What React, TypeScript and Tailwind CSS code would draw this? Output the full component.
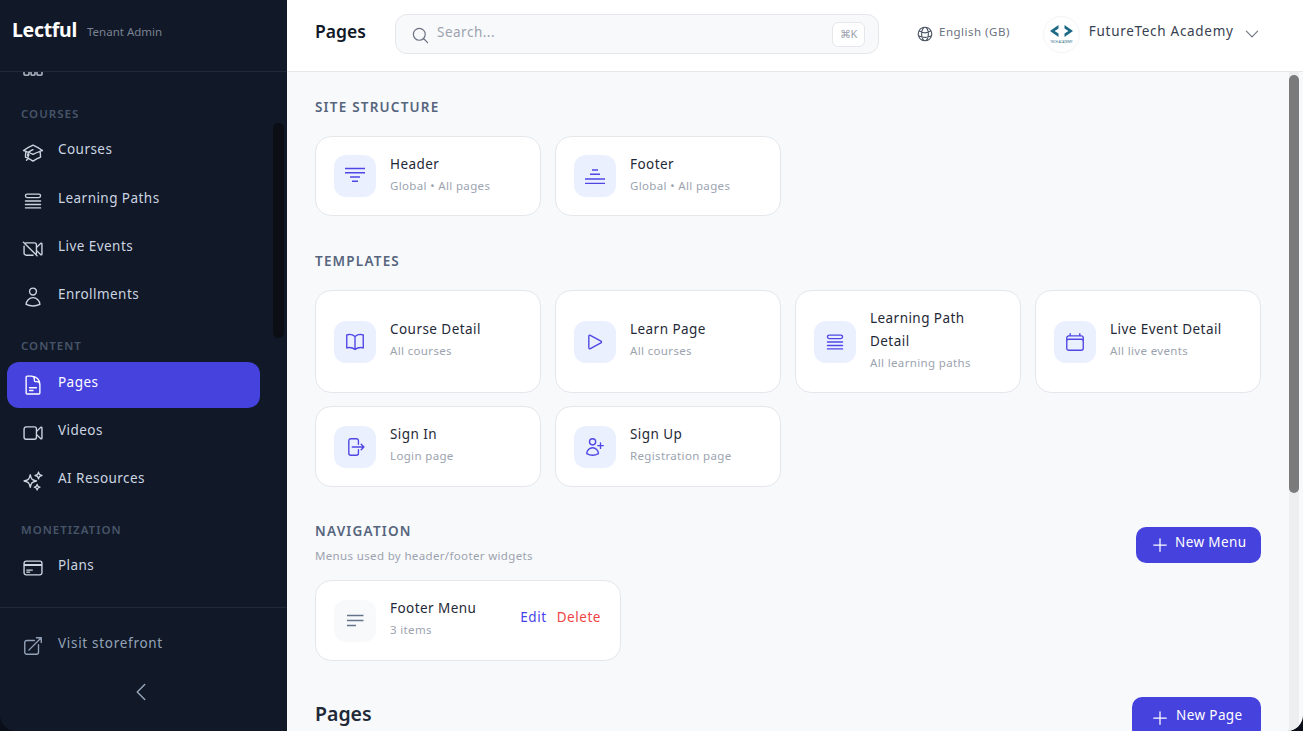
import React from "react";
import {
  HiOutlineAcademicCap, HiOutlineQueueList, HiOutlineVideoCameraSlash, HiOutlineUser,
  HiOutlineDocumentText, HiOutlineVideoCamera, HiOutlineSparkles, HiOutlineCreditCard,
  HiOutlineArrowTopRightOnSquare, HiOutlineChevronLeft, HiOutlineChevronDown, HiOutlineMagnifyingGlass,
  HiOutlineGlobeAlt, HiOutlineBookOpen, HiOutlinePlay, HiOutlineCalendar, HiOutlineArrowRightOnRectangle,
  HiOutlineUserPlus, HiOutlinePlus,
} from "react-icons/hi2";

const font = { fontFamily: '"Noto Sans", sans-serif' };

function HeaderIcon() {
  return (
    <svg width="22" height="22" viewBox="0 0 22 22" fill="none" stroke="currentColor" strokeWidth="1.4">
      <path d="M1 3.5h20M1 7.7h20M6 12h10M8 16.3h6" />
    </svg>
  );
}
function FooterIcon() {
  return (
    <svg width="22" height="22" viewBox="0 0 22 22" fill="none" stroke="currentColor" strokeWidth="1.4">
      <path d="M8 5h6M6 9.3h10M1 14h20M1 18.4h20" />
    </svg>
  );
}
function MenuIcon() {
  return (
    <svg width="22" height="22" viewBox="0 0 22 22" fill="none" stroke="currentColor" strokeWidth="1.4">
      <path d="M3 5.5h16.5M3 10.5h16.5M3 15.5h9" />
    </svg>
  );
}

function NavItem({ icon: I, label, active, tight }: { icon: any; label: string; active?: boolean; tight?: boolean }) {
  return (
    <div className={`ml-[7px] mr-[27px] h-[46px] flex items-center px-[15px] gap-[14px] rounded-xl ${tight ? "mb-[2px]" : "mb-[2.3px]"} ${active ? "bg-[#4642de] text-white" : "text-[#cbd5e1]"}`}>
      <I className="w-[22px] h-[22px] shrink-0" />
      <span className="text-[13.5px] tracking-[0.45px] mb-[6px]">{label}</span>
    </div>
  );
}

function Label({ children }: { children: React.ReactNode }) {
  return <div className="ml-[21px] h-[16px] leading-[16px] text-[11.5px] font-semibold tracking-[1px] text-[#475569]">{children}</div>;
}

function Card({ icon, title, sub, muted, wide, actions }: { icon: React.ReactNode; title: string; sub: string; muted?: boolean; wide?: boolean; actions?: boolean }) {
  return (
    <div className={`bg-white border border-[#e5e7eb] rounded-2xl px-[18px] flex items-center gap-[14px] ${wide ? "w-[306px] h-[81px]" : ""}`}>
      <div className={`w-[42px] h-[42px] rounded-xl flex items-center justify-center shrink-0 ${muted ? "bg-[#f8f9fb] text-[#64748b]" : "bg-[#ebf0fe] text-[#4f46e5]"}`}>
        {icon}
      </div>
      <div className="flex-1 min-w-0 mb-[4px]">
        <div className="text-[13.5px] leading-[23px] tracking-[0.45px] text-[#1f2937]">{title}</div>
        <div className="text-[11.5px] leading-[20px] tracking-[0.35px] text-[#9ca3af]">{sub}</div>
      </div>
      {actions && (
        <div className="flex gap-[10px] text-[13.5px] tracking-[0.55px] mb-[6px] mr-[1px]">
          <span className="text-[#4642e8]">Edit</span>
          <span className="text-[#ef4444]">Delete</span>
        </div>
      )}
    </div>
  );
}

function Section({ children }: { children: React.ReactNode }) {
  return <div className="text-[13.5px] leading-[20px] font-semibold tracking-[1.2px] text-[#56657d]">{children}</div>;
}

function Button({ label, box }: { label: string; box: string }) {
  return (
    <div className={`shrink-0 rounded-[10px] bg-[#4642de] text-white flex items-center ${box}`}>
      <HiOutlinePlus className="w-[20px] h-[20px]" />
      <span className="text-[13.5px] tracking-[0.4px] mb-[6px]">{label}</span>
    </div>
  );
}

const ic = "w-[22px] h-[22px]";

export default function App() {
  return (
    <div className="h-[731px] w-full bg-[#0b0f19] overflow-hidden" style={font}>
      <div className="h-full flex rounded-b-[16px] overflow-hidden relative">
        <aside className="w-[287px] shrink-0 bg-[#111827] flex flex-col relative">
          <div className="h-[72px] shrink-0 border-b border-[#1f2937] flex items-center pl-[12px] pb-[8px] gap-[10px]">
            <span className="text-[19.5px] font-bold text-white mb-[3px] tracking-[-0.3px]">Lectful</span>
            <span className="text-[11.5px] text-[#7a8291] mt-[1px]">Tenant Admin</span>
          </div>
          <div className="flex-1 overflow-hidden min-h-0">
            <div className="h-[4px] pl-[23px] text-[#cbd5e1]">
              <svg width="20" height="4" viewBox="0 0 20 4" fill="none" stroke="currentColor" strokeWidth="1.3" className="block">
                <path d="M1 0v2.2q0 1 1 1h3q1 0 1-1V0M8 0v2.2q0 1 1 1h2q1 0 1-1V0M14 0v2.2q0 1 1 1h3q1 0 1-1V0" />
              </svg>
            </div>
            <div className="h-[30px]" />
            <Label>COURSES</Label>
            <div className="h-[7.6px]" />
            <NavItem icon={HiOutlineAcademicCap} label="Courses" />
            <NavItem icon={HiOutlineQueueList} label="Learning Paths" />
            <NavItem icon={HiOutlineVideoCameraSlash} label="Live Events" />
            <NavItem icon={HiOutlineUser} label="Enrollments" />
            <div className="h-[15.4px]" />
            <Label>CONTENT</Label>
            <div className="h-[8px]" />
            <NavItem tight icon={HiOutlineDocumentText} label="Pages" active />
            <NavItem tight icon={HiOutlineVideoCamera} label="Videos" />
            <NavItem tight icon={HiOutlineSparkles} label="AI Resources" />
            <div className="h-[16px]" />
            <Label>MONETIZATION</Label>
            <div className="h-[7px]" />
            <NavItem icon={HiOutlineCreditCard} label="Plans" />
          </div>
          <div className="h-[124px] shrink-0 border-t border-[#1f2937]">
            <div className="h-[76px] flex items-center pl-[22px] gap-[14px] text-[#94a3b8]">
              <HiOutlineArrowTopRightOnSquare className="w-[22px] h-[22px]" />
              <span className="text-[13.5px] tracking-[0.7px] mb-[6px]">Visit storefront</span>
            </div>
            <div className="flex justify-center pr-[6px] text-[#94a3b8] -mt-[4px]">
              <HiOutlineChevronLeft className="w-[24px] h-[24px]" />
            </div>
          </div>
          <div className="absolute left-[273px] top-[123px] w-[11px] h-[215px] rounded-full bg-[#0b0f15]" />
        </aside>
        <main className="flex-1 min-w-0 flex flex-col bg-[#f8f9fb] relative">
          <header className="h-[72px] shrink-0 bg-white border-b border-[#e5e7eb] flex items-center pl-[28px] pb-[3px]">
            <span className="w-[80px] text-[17.5px] font-semibold text-[#111827] mb-[6px]">Pages</span>
            <div className="w-[484px] h-[40px] rounded-xl bg-[#f8f9fb] border border-[#e5e7eb] flex items-center pl-[15px] pr-[13px]">
              <HiOutlineMagnifyingGlass className="w-[19px] h-[19px] text-[#6b7280] mt-[2px]" />
              <span className="ml-[7px] flex-1 text-[13.5px] tracking-[0.5px] text-[#9ca3af] mb-[3px]">Search...</span>
              <span className="w-[33px] h-[25px] rounded-md border border-[#e5e7eb] bg-white text-[11px] text-[#9ca3af] flex items-center justify-center">⌘K</span>
            </div>
            <HiOutlineGlobeAlt className="w-[18px] h-[18px] ml-[37px] text-[#4b5563]" />
            <span className="ml-[5px] text-[11.5px] tracking-[0.5px] text-[#6b7280] mb-[5px]">English (GB)</span>
            <div className="ml-[33px] w-[37px] h-[37px] rounded-full border border-[#f3f4f6] flex flex-col items-center justify-center shrink-0">
              <svg width="23" height="12" viewBox="0 0 23 12" className="mt-[1px]">
                <path d="M0 6 L8.5 0 L8.5 3.6 L4.6 6 L8.5 8.4 L8.5 12Z" fill="#1c6a85" />
                <path d="M23 6 L14.5 0 L14.5 3.6 L18.4 6 L14.5 8.4 L14.5 12Z" fill="#1c6a85" />
              </svg>
              <span className="text-[3px] leading-[5px] mt-[3px] text-[#1c6a85] whitespace-nowrap">TECH ACADEMY</span>
            </div>
            <span className="ml-[9px] text-[13.5px] tracking-[0.7px] text-[#374151] mb-[5px] whitespace-nowrap">FutureTech Academy</span>
            <HiOutlineChevronDown className="w-[18px] h-[18px] ml-[9px] text-[#6b7280]" />
          </header>
          <div className="flex-1 min-h-0 overflow-hidden pl-[28px] pr-[42px] pt-[25px]">
            <Section>SITE STRUCTURE</Section>
            <div className="grid grid-cols-4 gap-[14px] mt-[19px] auto-rows-[80px]">
              <Card icon={<HeaderIcon />} title="Header" sub="Global • All pages" />
              <Card icon={<FooterIcon />} title="Footer" sub="Global • All pages" />
            </div>
            <div className="mt-[35px]"><Section>TEMPLATES</Section></div>
            <div className="grid grid-cols-4 gap-[13px_14px] mt-[19px] grid-rows-[103px_81px]">
              <Card icon={<HiOutlineBookOpen className={ic} />} title="Course Detail" sub="All courses" />
              <Card icon={<HiOutlinePlay className={ic} />} title="Learn Page" sub="All courses" />
              <Card icon={<HiOutlineQueueList className={ic} />} title="Learning Path Detail" sub="All learning paths" />
              <Card icon={<HiOutlineCalendar className={ic} />} title="Live Event Detail" sub="All live events" />
              <Card icon={<HiOutlineArrowRightOnRectangle className={ic} />} title="Sign In" sub="Login page" />
              <Card icon={<HiOutlineUserPlus className={ic} />} title="Sign Up" sub="Registration page" />
            </div>
            <div className="mt-[34px] flex items-start justify-between">
              <div>
                <Section>NAVIGATION</Section>
                <div className="text-[11.5px] leading-[20px] mt-[5px] tracking-[0.35px] text-[#9ca3af]">Menus used by header/footer widgets</div>
              </div>
              <div className="mt-[6px]"><Button label="New Menu" box="h-[36px] w-[125px] pl-[14px] gap-[5px]" /></div>
            </div>
            <div className="mt-[14px]">
              <Card wide muted actions icon={<MenuIcon />} title="Footer Menu" sub="3 items" />
            </div>
            <div className="mt-[36px] flex items-start justify-between">
              <span className="text-[19.5px] leading-[34px] font-semibold text-[#1f2937]">Pages</span>
              <Button label="New Page" box="h-[42px] w-[129px] pl-[18px] gap-[6px]" />
            </div>
          </div>
          <div className="absolute right-[4px] top-[72px] bottom-0 w-[10px] bg-[#eceef0]" />
          <div className="absolute right-[4px] top-[75px] w-[10px] h-[418px] rounded-full bg-[#7b7b7b]" />
        </main>
      </div>
    </div>
  );
}
